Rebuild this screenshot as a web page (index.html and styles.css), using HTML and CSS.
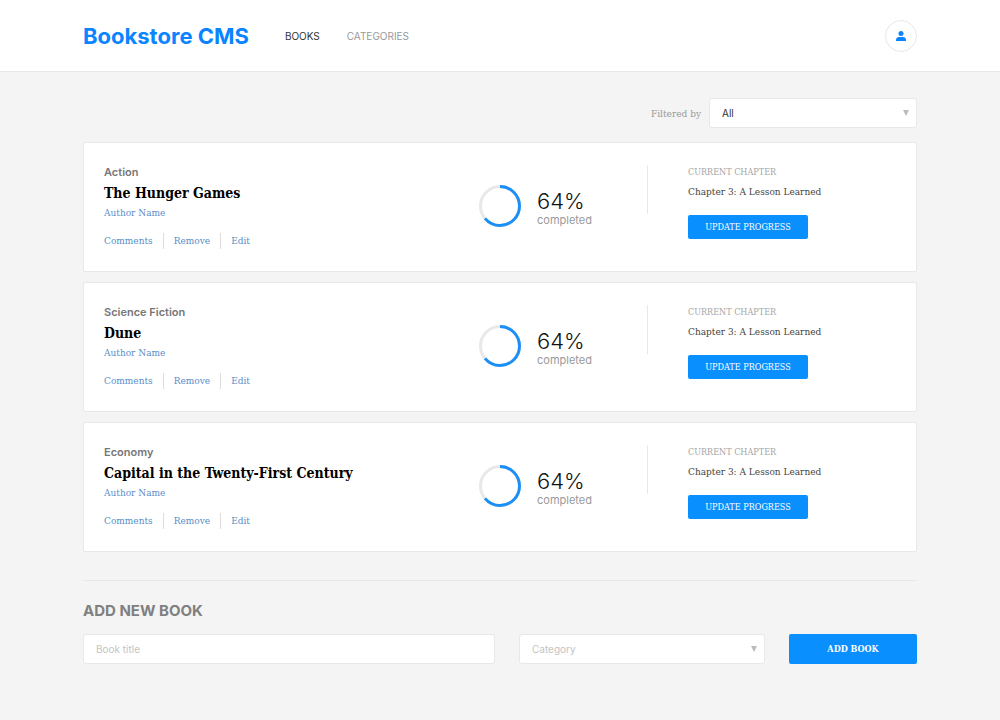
FILE: index.html
```html
<!DOCTYPE html>
<html lang="en">
<head>
<meta charset="utf-8">
<meta name="viewport" content="width=device-width, initial-scale=1">
<title>Bookstore CMS</title>
<link rel="stylesheet" href="styles.css">
</head>
<body>
<header class="header">
  <h1 class="brand">Bookstore CMS</h1>
  <nav class="nav">
    <a class="nav-link active" href="#books">BOOKS</a>
    <a class="nav-link" href="#categories">CATEGORIES</a>
  </nav>
  <button class="profile" type="button" aria-label="Profile">
    <svg width="10" height="10" viewBox="0 0 10 10" fill="#0a84ff" aria-hidden="true"><circle cx="5" cy="2.5" r="2.5"/><path d="M0 10V8.8C0 7.2 1.4 6 3.2 6h3.6C8.600 6 10 7.200 10 8.800V10z"/></svg>
  </button>
</header>
<main class="main">
  <div class="filter">
    <label for="filter">Filtered by</label>
    <div class="select-wrap">
      <select id="filter" class="field"><option>All</option><option>Action</option><option>Science Fiction</option><option>Economy</option></select>
      <svg class="arrow" width="6" height="6" viewBox="0 0 6 6" fill="#bbb" aria-hidden="true"><path d="M0 0h6L3 6z"/></svg>
    </div>
  </div>
  <section class="books">
    <article class="card">
      <div class="info">
        <p class="category">Action</p>
        <h2 class="title">The Hunger Games</h2>
        <a class="author" href="#author">Author Name</a>
        <div class="actions"><button type="button">Comments</button><button type="button">Remove</button><button type="button">Edit</button></div>
      </div>
      <div class="progress">
        <svg width="42" height="42" viewBox="0 0 42 42" fill="none" stroke-width="3" aria-hidden="true"><circle cx="21" cy="21" r="19.5" stroke="#e8e8e8"/><circle cx="21" cy="21" r="19.5" stroke="#1c8ff7" pathLength="100" stroke-dasharray="64 36" transform="rotate(-90 21 21)"/></svg>
        <div><p class="percent">64%</p><p class="completed">completed</p></div>
      </div>
      <div class="chapter">
        <p class="chapter-label">CURRENT CHAPTER</p>
        <p class="chapter-name">Chapter 3: A Lesson Learned</p>
        <button class="update" type="button">UPDATE PROGRESS</button>
      </div>
    </article>
    <article class="card">
      <div class="info">
        <p class="category">Science Fiction</p>
        <h2 class="title">Dune</h2>
        <a class="author" href="#author">Author Name</a>
        <div class="actions"><button type="button">Comments</button><button type="button">Remove</button><button type="button">Edit</button></div>
      </div>
      <div class="progress">
        <svg width="42" height="42" viewBox="0 0 42 42" fill="none" stroke-width="3" aria-hidden="true"><circle cx="21" cy="21" r="19.5" stroke="#e8e8e8"/><circle cx="21" cy="21" r="19.5" stroke="#1c8ff7" pathLength="100" stroke-dasharray="64 36" transform="rotate(-90 21 21)"/></svg>
        <div><p class="percent">64%</p><p class="completed">completed</p></div>
      </div>
      <div class="chapter">
        <p class="chapter-label">CURRENT CHAPTER</p>
        <p class="chapter-name">Chapter 3: A Lesson Learned</p>
        <button class="update" type="button">UPDATE PROGRESS</button>
      </div>
    </article>
    <article class="card">
      <div class="info">
        <p class="category">Economy</p>
        <h2 class="title">Capital in the Twenty-First Century</h2>
        <a class="author" href="#author">Author Name</a>
        <div class="actions"><button type="button">Comments</button><button type="button">Remove</button><button type="button">Edit</button></div>
      </div>
      <div class="progress">
        <svg width="42" height="42" viewBox="0 0 42 42" fill="none" stroke-width="3" aria-hidden="true"><circle cx="21" cy="21" r="19.5" stroke="#e8e8e8"/><circle cx="21" cy="21" r="19.5" stroke="#1c8ff7" pathLength="100" stroke-dasharray="64 36" transform="rotate(-90 21 21)"/></svg>
        <div><p class="percent">64%</p><p class="completed">completed</p></div>
      </div>
      <div class="chapter">
        <p class="chapter-label">CURRENT CHAPTER</p>
        <p class="chapter-name">Chapter 3: A Lesson Learned</p>
        <button class="update" type="button">UPDATE PROGRESS</button>
      </div>
    </article>
  </section>
  <section class="add">
    <h2 class="add-title">ADD NEW BOOK</h2>
    <form class="add-form">
      <input class="field" type="text" placeholder="Book title" aria-label="Book title">
      <div class="select-wrap">
        <select class="field empty" aria-label="Category"><option>Category</option><option>Action</option><option>Science Fiction</option><option>Economy</option></select>
        <svg class="arrow" width="6" height="6" viewBox="0 0 6 6" fill="#bbb" aria-hidden="true"><path d="M0 0h6L3 6z"/></svg>
      </div>
      <button class="submit" type="button">ADD BOOK</button>
    </form>
  </section>
</main>
</body>
</html>
```
FILE: styles.css
```css
:root {
  --sans: Inter, "Open Sans", sans-serif;
  --slab: "DejaVu Serif Condensed", "DejaVu Serif", serif;
  --blue: #0a8fff;
  --line: #e8e8e8;
}

* {
  box-sizing: border-box;
}

body {
  margin: 0;
  background: #f4f4f4;
  color: #121212;
  font-family: var(--sans);
  font-size: 10px;
}

h1, h2, p {
  margin: 0;
}

a {
  text-decoration: none;
}

button, input, select {
  margin: 0;
  font: inherit;
  cursor: pointer;
}

.header {
  display: flex;
  align-items: center;
  height: 72px;
  padding: 0 83px;
  background: #fff;
  border-bottom: 1px solid var(--line);
}

.brand {
  color: #0a84ff;
  font-size: 22px;
  line-height: 28px;
  font-weight: 700;
}

.nav {
  display: flex;
  gap: 27px;
  margin-left: 36px;
}

.nav-link {
  color: #999;
  line-height: 16px;
}

.nav-link.active {
  color: #333;
}

.profile {
  display: flex;
  align-items: center;
  justify-content: center;
  width: 32px;
  height: 32px;
  margin-left: auto;
  padding: 0;
  background: #fff;
  border: 1px solid var(--line);
  border-radius: 50%;
}

.main {
  padding: 26px 83px 56px;
}

.filter {
  display: flex;
  align-items: center;
  justify-content: flex-end;
  gap: 8px;
  margin-bottom: 14px;
  color: #999;
  font-family: var(--slab);
}

.filter .select-wrap {
  width: 208px;
}

.select-wrap {
  position: relative;
}

.arrow {
  position: absolute;
  top: 12px;
  right: 8px;
  pointer-events: none;
}

.field {
  display: block;
  width: 100%;
  height: 30px;
  padding: 0 12px;
  appearance: none;
  background: #fff;
  border: 1px solid var(--line);
  border-radius: 3px;
  color: #333;
  font-family: var(--sans);
  font-size: 10px;
}

.field.empty,
.field::placeholder {
  color: #c4c4c4;
  opacity: 1;
}

.books {
  display: grid;
  gap: 10px;
}

.card {
  display: grid;
  grid-template-columns: 1fr 168px 269px;
  padding: 20px 0 22px 20px;
  background: #fff;
  border: 1px solid var(--line);
  border-radius: 2px;
}

.category {
  color: #777;
  font-size: 11px;
  font-weight: 600;
  line-height: 18px;
}

.title {
  color: #000;
  font-family: var(--slab);
  font-size: 14px;
  font-weight: 700;
  line-height: 24px;
}

.author {
  display: block;
  color: #5a8ec9;
  font-family: var(--slab);
  line-height: 16px;
}

.actions {
  display: flex;
  margin-top: 12px;
}

.actions button {
  height: 16px;
  padding: 0 10px;
  background: none;
  border: 0;
  border-right: 1px solid #ddd;
  color: #5a8ec9;
  font-family: var(--slab);
  line-height: 16px;
}

.actions button:first-child {
  padding-left: 0;
}

.actions button:last-child {
  border-right: 0;
}

.progress {
  display: flex;
  align-items: flex-end;
  align-self: start;
  gap: 16px;
  padding-top: 22px;
}

.percent {
  font-size: 22px;
  font-weight: 300;
  line-height: 24px;
}

.completed {
  color: #999;
  font-size: 11px;
  line-height: 14px;
}

.chapter {
  display: grid;
  justify-items: start;
  align-content: start;
  padding-left: 41px;
  background: linear-gradient(var(--line), var(--line)) 0 2px / 1px 49px no-repeat;
  font-family: var(--slab);
}

.chapter-label {
  color: #a5a5a5;
  font-size: 9px;
  line-height: 18px;
}

.chapter-name {
  color: #444;
  line-height: 22px;
}

.update {
  min-width: 120px;
  height: 24px;
  margin-top: 12px;
  padding: 0 12px;
  background: var(--blue);
  border: 0;
  border-radius: 2px;
  color: #fff;
  font-size: 9px;
}

.add {
  margin-top: 28px;
  padding-top: 20px;
  border-top: 1px solid var(--line);
}

.add-title {
  color: #808080;
  font-size: 15px;
  font-weight: 700;
  line-height: 20px;
}

.add-form {
  display: grid;
  grid-template-columns: 1fr 246px 128px;
  gap: 24px;
  margin-top: 13px;
}

.submit {
  height: 30px;
  background: var(--blue);
  border: 0;
  border-radius: 2px;
  color: #fff;
  font-family: var(--slab);
  font-size: 9px;
  font-weight: 700;
}
```
